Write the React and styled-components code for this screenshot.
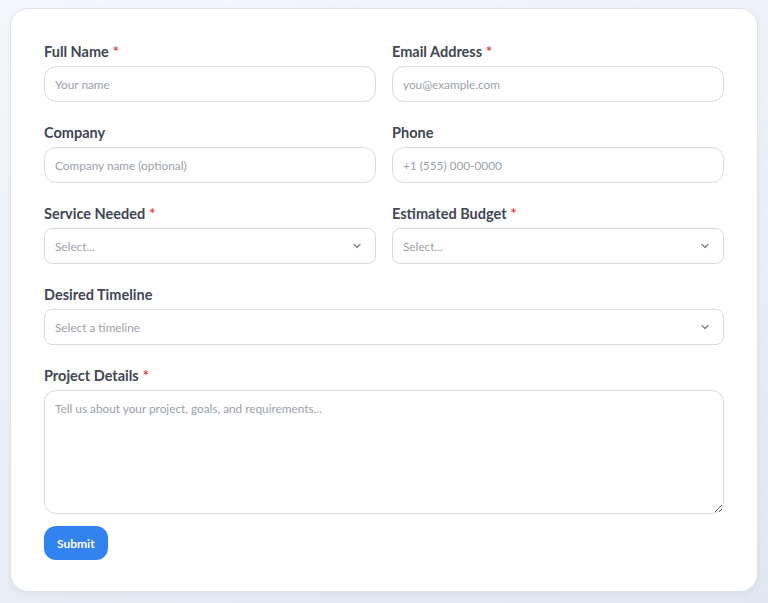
import React from 'react';
import styled, { createGlobalStyle } from 'styled-components';

const GlobalStyle = createGlobalStyle`
  html, body {
    margin: 0;
    padding: 0;
  }
  body {
    font-family: Lato, "Noto Sans", "Liberation Sans", sans-serif;
    background: linear-gradient(160deg, #f4f7fb 0%, #e9eef5 60%, #e1e7ef 100%);
    min-height: 603px;
  }
`;

const Page = styled.div`
  padding: 8px 10px 10px 10px;
`;

const Card = styled.form`
  background: #fff;
  border: 1px solid #dbe2ea;
  border-radius: 18px;
  box-shadow: 0 2px 6px rgba(30, 41, 59, 0.05);
  padding: 31px 33px 31px 33px;
  display: flex;
  flex-direction: column;
  gap: 19px;
`;

const Row = styled.div`
  display: grid;
  grid-template-columns: ${p => (p.cols === 2 ? '1fr 1fr' : '1fr')};
  gap: 16px;
`;

const Field = styled.div`
  display: flex;
  flex-direction: column;
  gap: 4px;
`;

const Label = styled.label`
  padding-top: 2px;
  font-size: 14.5px;
  font-weight: 700;
  line-height: 20px;
  color: #3f4654;
  span {
    color: #e5484d;
    margin-left: 4px;
  }
`;

const Input = styled.input`
  box-sizing: border-box;
  height: 36px;
  border: 1px solid #d5dbe3;
  border-radius: 12px;
  padding: 0 10px;
  font-family: inherit;
  font-size: 11.8px;
  color: #374151;
  background: #fff;
  outline: none;
  &::placeholder {
    color: #9aa1ab;
  }
`;

const SelectBox = styled.div`
  box-sizing: border-box;
  height: 36px;
  border: 1px solid #d5dbe3;
  border-radius: 8px;
  padding: 0 13px 0 10px;
  display: flex;
  align-items: center;
  justify-content: space-between;
  font-size: 11.8px;
  color: #9aa1ab;
  background: #fff;
`;

const TextArea = styled.textarea`
  box-sizing: border-box;
  height: 124px;
  border: 1px solid #d5dbe3;
  border-radius: 12px;
  padding: 10px 10px;
  font-family: inherit;
  font-size: 11.8px;
  color: #374151;
  resize: vertical;
  outline: none;
  &::placeholder {
    color: #9aa1ab;
  }
`;

const Actions = styled.div`
  margin-top: -7px;
  display: flex;
`;

const SubmitButton = styled.button`
  height: 34px;
  padding: 0 13px;
  border: 0;
  border-radius: 12px;
  background: #3282ef;
  color: #fff;
  font-family: inherit;
  font-size: 12px;
  font-weight: 700;
  cursor: pointer;
`;

const Chevron = () => (
  <svg width="10" height="10" viewBox="0 0 10 10" fill="none">
    <path d="M2 3.5 L5 6.5 L8 3.5" stroke="#7b828d" strokeWidth="1.3" strokeLinecap="round" strokeLinejoin="round" />
  </svg>
);

const Select = ({ placeholder }) => (
  <SelectBox>
    <span>{placeholder}</span>
    <Chevron />
  </SelectBox>
);

const FormLabel = ({ children, required }) => (
  <Label>
    {children}
    {required && <span>*</span>}
  </Label>
);

export default function App() {
  return (
    <Page>
      <GlobalStyle />
      <Card onSubmit={e => e.preventDefault()}>
        <Row cols={2}>
          <Field>
            <FormLabel required>Full Name</FormLabel>
            <Input placeholder="Your name" />
          </Field>
          <Field>
            <FormLabel required>Email Address</FormLabel>
            <Input placeholder="you@example.com" />
          </Field>
        </Row>
        <Row cols={2}>
          <Field>
            <FormLabel>Company</FormLabel>
            <Input placeholder="Company name (optional)" />
          </Field>
          <Field>
            <FormLabel>Phone</FormLabel>
            <Input placeholder="+1 (555) 000-0000" />
          </Field>
        </Row>
        <Row cols={2}>
          <Field>
            <FormLabel required>Service Needed</FormLabel>
            <Select placeholder="Select..." />
          </Field>
          <Field>
            <FormLabel required>Estimated Budget</FormLabel>
            <Select placeholder="Select..." />
          </Field>
        </Row>
        <Row>
          <Field>
            <FormLabel>Desired Timeline</FormLabel>
            <Select placeholder="Select a timeline" />
          </Field>
        </Row>
        <Row>
          <Field>
            <FormLabel required>Project Details</FormLabel>
            <TextArea placeholder="Tell us about your project, goals, and requirements..." />
          </Field>
        </Row>
        <Actions>
          <SubmitButton type="submit">Submit</SubmitButton>
        </Actions>
      </Card>
    </Page>
  );
}
